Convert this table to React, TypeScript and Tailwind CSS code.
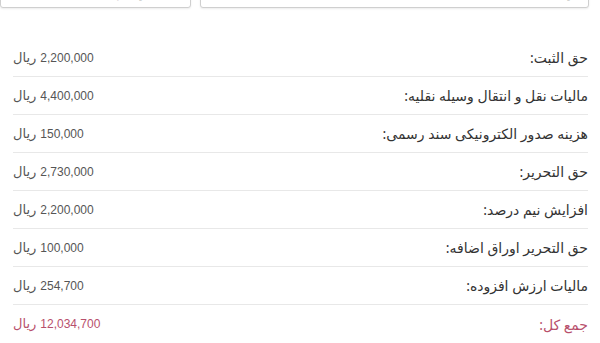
import React from "react";

const rows: { label: string; value: string }[] = [
  { label: "حق الثبت:", value: "2,200,000" },
  { label: "مالیات نقل و انتقال وسیله نقلیه:", value: "4,400,000" },
  { label: "هزینه صدور الکترونیکی سند رسمی:", value: "150,000" },
  { label: "حق التحریر:", value: "2,730,000" },
  { label: "افزایش نیم درصد:", value: "2,200,000" },
  { label: "حق التحریر اوراق اضافه:", value: "100,000" },
  { label: "مالیات ارزش افزوده:", value: "254,700" },
];

const fa = { fontFamily: '"Noto Sans", "DejaVu Sans", sans-serif' };
const num = { fontFamily: '"Liberation Sans", Arial, sans-serif' };

function Row({ label, value, total }: { label: string; value: string; total?: boolean }) {
  return (
    <div
      className={`flex h-[38px] items-center justify-between ${total ? "" : "border-b border-[#e8e8e8]"}`}
    >
      <span className={`text-[14px] ${total ? "text-[#b8506c]" : "text-[#333]"}`} style={fa}>
        {label}
      </span>
      <span className={`flex items-center gap-[4px] ${total ? "text-[#b8506c]" : "text-[#555]"}`} dir="ltr">
        <span className="text-[13px]" style={fa}>ریال</span>
        <span className="text-[12px]" style={num}>{value}</span>
      </span>
    </div>
  );
}

export default function App() {
  return (
    <div dir="rtl" className="w-[600px] h-[343px] overflow-hidden bg-white">
      <div className="mt-[-26px] flex gap-[9px] pr-[11px]">
        <div
          className="h-[34px] flex-1 rounded-[3px] border border-[#cfcfcf] bg-white px-[10px] pt-[8px] text-[13px] text-[#555] shadow-[0_1px_2px_rgba(0,0,0,0.08)]"
          style={fa}
        >
          <div className="flex justify-between">
            <span>نوع پلاک</span>
            <span className="pl-[60px]">انتخاب کنید</span>
          </div>
        </div>
        <div
          className="h-[34px] w-[191px] rounded-[3px] border border-[#cfcfcf] bg-white px-[40px] pt-[8px] text-[13px] text-[#555] shadow-[0_1px_2px_rgba(0,0,0,0.08)]"
          style={fa}
        >
          <span>نوع پرداخت ها</span>
        </div>
      </div>
      <div className="mt-[31px] pl-[13px] pr-[12px]">
        {rows.map((r) => (
          <Row key={r.label} label={r.label} value={r.value} />
        ))}
        <Row label="جمع کل:" value="12,034,700" total />
      </div>
    </div>
  );
}
